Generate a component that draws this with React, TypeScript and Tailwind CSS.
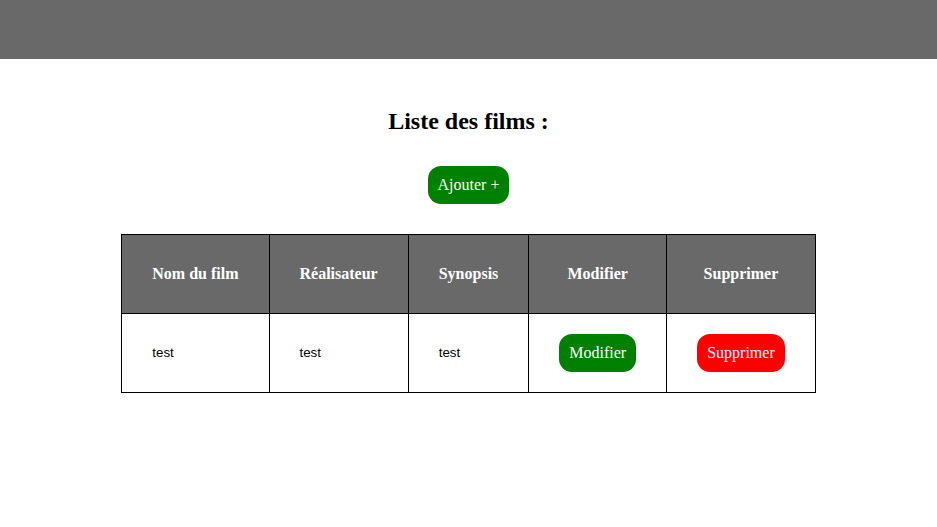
import React from "react";

const films = [{ nom: "test", realisateur: "test", synopsis: "test" }];

export default function App() {
  return (
    <div className="min-h-[527px] bg-white" style={{ fontFamily: '"Liberation Serif", serif' }}>
      <header className="h-[59px] bg-[#696969]" />
      <main className="flex flex-col items-center">
        <h2 className="mt-[48px] text-[24px] leading-[28px] font-bold text-black">Liste des films :</h2>
        <button className="mt-[31px] h-[38px] rounded-[13px] bg-[#008000] px-[10px] text-[16px] leading-[18px] text-white">
          Ajouter +
        </button>
        <table className="mt-[30px] border-collapse border border-black">
          <thead>
            <tr className="bg-[#696969] text-white">
              {["Nom du film", "Réalisateur", "Synopsis", "Modifier", "Supprimer"].map((h) => (
                <th key={h} className="border border-black px-[30px] py-[30px] text-[16px] leading-[18px] font-bold">
                  {h}
                </th>
              ))}
            </tr>
          </thead>
          <tbody>
            {films.map((f, i) => (
              <tr key={i}>
                {[f.nom, f.realisateur, f.synopsis].map((v, j) => (
                  <td
                    key={j}
                    className="border border-black px-[30px] py-[20px] text-left text-[13.33px] text-black"
                    style={{ fontFamily: '"Liberation Sans", Arial, sans-serif' }}
                  >
                    {v}
                  </td>
                ))}
                <td className="border border-black px-[30px] py-[20px] text-left">
                  <button className="h-[38px] rounded-[13px] bg-[#008000] px-[10px] text-[16px] leading-[18px] text-white">
                    Modifier
                  </button>
                </td>
                <td className="border border-black px-[30px] py-[20px] text-left">
                  <button className="h-[38px] rounded-[13px] bg-[#ff0000] px-[10px] text-[16px] leading-[18px] text-white">
                    Supprimer
                  </button>
                </td>
              </tr>
            ))}
          </tbody>
        </table>
      </main>
    </div>
  );
}
